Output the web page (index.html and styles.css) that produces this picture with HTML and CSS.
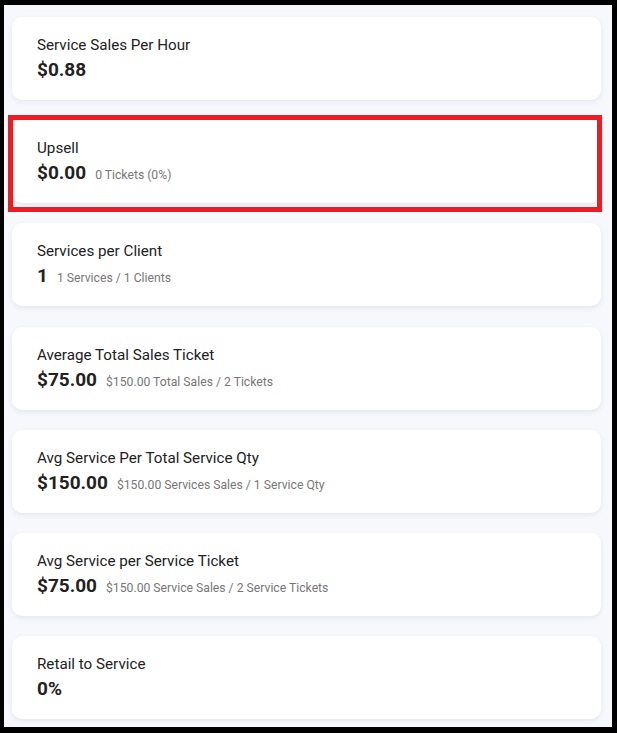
FILE: index.html
```html
<!doctype html>
<html>
<head>
<meta charset="utf-8">
<title>Service Metrics</title>
<link rel="stylesheet" href="styles.css">
</head>
<body>
<div class="panel">

<div class="kpi">
<div class="kpi-title">Service Sales Per Hour</div>
<div class="kpi-row"><span class="kpi-value">$0.88</span></div>
</div>

<div class="kpi marked">
<div class="kpi-title">Upsell</div>
<div class="kpi-row"><span class="kpi-value">$0.00</span><span class="kpi-note">0 Tickets (0%)</span></div>
</div>

<div class="kpi">
<div class="kpi-title">Services per Client</div>
<div class="kpi-row"><span class="kpi-value">1</span><span class="kpi-note">1 Services / 1 Clients</span></div>
</div>

<div class="kpi">
<div class="kpi-title">Average Total Sales Ticket</div>
<div class="kpi-row"><span class="kpi-value">$75.00</span><span class="kpi-note">$150.00 Total Sales / 2 Tickets</span></div>
</div>

<div class="kpi">
<div class="kpi-title">Avg Service Per Total Service Qty</div>
<div class="kpi-row"><span class="kpi-value">$150.00</span><span class="kpi-note">$150.00 Services Sales / 1 Service Qty</span></div>
</div>

<div class="kpi">
<div class="kpi-title">Avg Service per Service Ticket</div>
<div class="kpi-row"><span class="kpi-value">$75.00</span><span class="kpi-note">$150.00 Service Sales / 2 Service Tickets</span></div>
</div>

<div class="kpi">
<div class="kpi-title">Retail to Service</div>
<div class="kpi-row"><span class="kpi-value">0%</span></div>
</div>

</div>
</body>
</html>
```

FILE: styles.css
```css
body{
margin:0;
background:#000;
font-family:Roboto, "Liberation Sans", sans-serif;
}
.panel{
margin:5px 0 0 4px;
width:608px;
height:722px;
background:#f7f8fc;
padding:12px 11px 0 8px;
box-sizing:border-box;
display:flex;
flex-direction:column;
gap:20.2px;
overflow:hidden;
}
.kpi{
position:relative;
flex:none;
height:83px;
box-sizing:border-box;
padding:18px 25px 0 25px;
background:#fff;
border-radius:10px;
box-shadow:0 2px 5px rgba(30,40,80,0.08);
}
.kpi-title{
font-size:15.2px;
line-height:20px;
color:#222;
}
.kpi-row{
margin-top:2px;
display:flex;
align-items:baseline;
gap:9px;
}
.kpi-value{
font-size:19px;
line-height:26px;
font-weight:700;
color:#222;
}
.kpi-note{
font-size:12.2px;
color:#777;
}
/* highlight frame */
.marked::after{
content:"";
position:absolute;
left:-4px;
right:-1px;
top:-5px;
bottom:-9px;
border:5px solid #ed1c24;
}
```
